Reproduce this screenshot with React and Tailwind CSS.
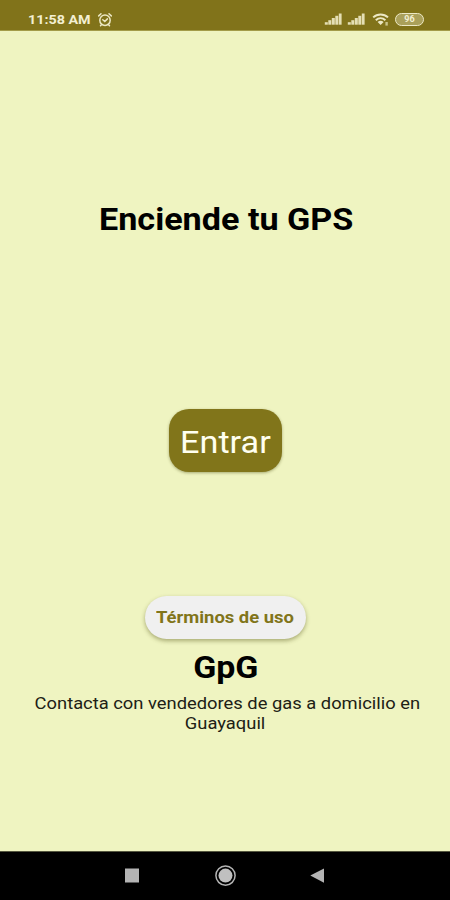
function AlarmIcon() {
  return (
    <svg viewBox="0 0 16 16" className="h-4 w-4 shrink-0" fill="none" stroke="#ece8c4" strokeWidth="1.5" strokeLinecap="round">
      <circle cx="8" cy="8.2" r="5.2" />
      <path d="M1.7 3.9 4 1.8M14.3 3.9 12 1.8M5.8 7.7l2 1.8 2.6-2.6M4.4 12.7l-.9 1M11.6 12.7l.9 1" />
    </svg>
  )
}

function SignalIcon() {
  return (
    <svg viewBox="0 0 18 12" className="h-3 w-[18px] shrink-0" fill="#e4dfb4">
      <rect x="0.8" y="9.2" width="3" height="2.5" />
      <rect x="4.3" y="7.2" width="3" height="4.5" />
      <rect x="7.8" y="5" width="3" height="6.7" />
      <rect x="11.3" y="2.8" width="3" height="8.9" />
      <rect x="14.8" y="0.5" width="2.8" height="11.2" />
    </svg>
  )
}

function WifiIcon() {
  return (
    <svg viewBox="0 0 18 14" className="h-3.5 w-[18px] shrink-0" fill="none" stroke="#ece8c4" strokeWidth="2">
      <path d="M1.2 5.4c4.2-4 10.6-4 14.8 0" />
      <path d="M3.8 8.2c2.8-2.5 6.8-2.5 9.6 0" />
      <path d="M5.6 9.9c1.8-1.5 4.2-1.5 6 0L8.6 13z" fill="#ece8c4" stroke="none" />
      <path d="M14.6 10v3.6" stroke="#c9c48a" strokeWidth="2.4" />
    </svg>
  )
}

function StatusBar() {
  return (
    <header className="flex h-[31px] items-start justify-between border-b border-[#a39c49] bg-[#81731a] pr-[26px] pl-[28px] text-[#f3efd2]">
      <div className="flex items-center gap-[7px] pt-[12px]">
        <span className="w-[62px] text-[13px] leading-4 font-bold whitespace-nowrap">
          <span className="inline-block origin-left scale-x-[1.1]">11:58 AM</span>
        </span>
        <AlarmIcon />
      </div>
      <div className="mt-[11px] flex h-4 items-center gap-[5px]">
        <SignalIcon />
        <SignalIcon />
        <span className="ml-[2px] flex"><WifiIcon /></span>
        <span className="flex h-[13px] w-[29px] items-center justify-center rounded-full border-[1.5px] border-[#ece8c4] bg-[#aaa05a] text-[9px] leading-none font-bold">
          96
        </span>
      </div>
    </header>
  )
}

function NavBar() {
  return (
    <nav className="flex h-[49px] items-center justify-center gap-[73px] border-t border-[#55573f] bg-black pb-px">
      <svg viewBox="0 0 24 24" className="h-6 w-6" fill="#b4b4b4">
        <rect x="5" y="4.5" width="14" height="14" />
      </svg>
      <svg viewBox="0 0 24 24" className="-ml-1 h-6 w-6">
        <circle cx="12.5" cy="11.6" r="9.6" fill="none" stroke="#b4b4b4" strokeWidth="1.5" />
        <circle cx="12.5" cy="11.6" r="7" fill="#c0c0c0" />
      </svg>
      <svg viewBox="0 0 24 24" className="-ml-1 h-6 w-6" fill="#b4b4b4">
        <path d="M4.3 11.6 18 4.4v14.4z" />
      </svg>
    </nav>
  )
}

export default function App() {
  return (
    <div className="flex h-[900px] w-[450px] flex-col overflow-hidden bg-[#eff4c1] font-['Roboto',sans-serif]">
      <StatusBar />
      <main className="flex flex-1 flex-col items-center text-black">
        <h1 className="mt-[168px] ml-[2px] text-[32px] leading-10 font-bold whitespace-nowrap">
          <span className="inline-block scale-x-[1.067]">Enciende tu GPS</span>
        </h1>
        <button className="mt-[170px] flex h-[63px] w-[113px] items-center justify-center rounded-[20px] bg-[#81751a] pt-[3px] text-[32px] leading-none text-[#fffff0] shadow-[0_1px_3px_rgba(80,80,20,0.45)]">
          <span className="inline-block scale-x-[1.07]">Entrar</span>
        </button>
        <button className="mt-[124px] flex h-[43px] w-[161px] items-center justify-center rounded-full bg-[#f0f0f0] pt-px text-base leading-none font-bold text-[#81751a] shadow-[0_2px_4px_rgba(80,80,20,0.45)]">
          <span className="inline-block scale-x-[1.15] whitespace-nowrap">Términos de uso</span>
        </button>
        <h2 className="mt-[8px] ml-px text-[32px] leading-10 font-bold">
          <span className="inline-block scale-x-[1.06]">GpG</span>
        </h2>
        <p className="mt-[7px] ml-[4px] text-center text-[16.5px] leading-[20px] text-[#202015]">
          <span className="inline-block scale-x-[1.112] whitespace-nowrap">
            Contacta con vendedores de gas a domicilio en
            <br />
            <span className="relative -left-[2px]">Guayaquil</span>
          </span>
        </p>
      </main>
      <NavBar />
    </div>
  )
}
